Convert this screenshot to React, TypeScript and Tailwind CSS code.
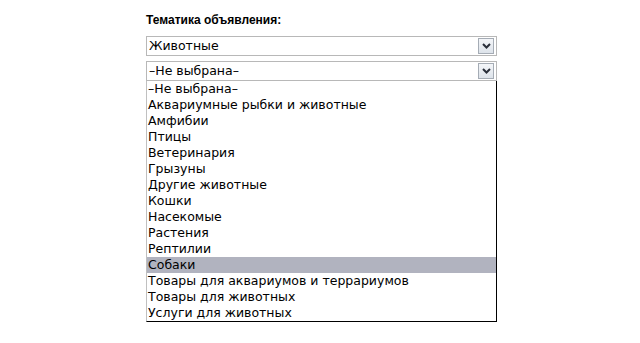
const options = [
  "—Не выбрана—",
  "Аквариумные рыбки и животные",
  "Амфибии",
  "Птицы",
  "Ветеринария",
  "Грызуны",
  "Другие животные",
  "Кошки",
  "Насекомые",
  "Растения",
  "Рептилии",
  "Собаки",
  "Товары для аквариумов и террариумов",
  "Товары для животных",
  "Услуги для животных",
];

function Arrow() {
  return (
    <div className="flex h-[16px] w-[16px] items-center justify-center border border-[#a5acb5] bg-gradient-to-b from-[#f4f6f9] to-[#dde3ea]">
      <svg width="9" height="6" viewBox="0 0 9 6">
        <path d="M1 1 L4.5 4.5 L8 1" fill="none" stroke="#2a2f3a" strokeWidth="2" />
      </svg>
    </div>
  );
}

function SelectBox({ value }: { value: string }) {
  return (
    <div className="flex h-[20px] w-[351px] items-center justify-between border border-[#b8b8b8] bg-white pl-[2px] pr-[2px]">
      <span>{value}</span>
      <Arrow />
    </div>
  );
}

export default function App() {
  return (
    <div className="h-[343px] w-[640px] bg-white pl-[146px] pt-[12px] text-[12.5px] leading-[16px] text-black font-['DejaVu_Sans',Verdana,sans-serif]">
      <div className="mb-[8px] font-['Liberation_Sans',Arial,sans-serif] text-[12px] font-bold">Тематика объявления:</div>
      <SelectBox value="Животные" />
      <div className="h-[5px]" />
      <SelectBox value="–Не выбрана–" />
      <div className="w-[351px] border border-l-[#c0c0c0] border-t-0 border-r-black border-b-black bg-white">
        {options.map((o) => (
          <div key={o} className={"h-[16px] whitespace-nowrap pl-[1px] " + (o === "Собаки" ? "bg-[#b1b3bf]" : "")}>
            {o === "—Не выбрана—" ? "–Не выбрана–" : o}
          </div>
        ))}
      </div>
    </div>
  );
}
